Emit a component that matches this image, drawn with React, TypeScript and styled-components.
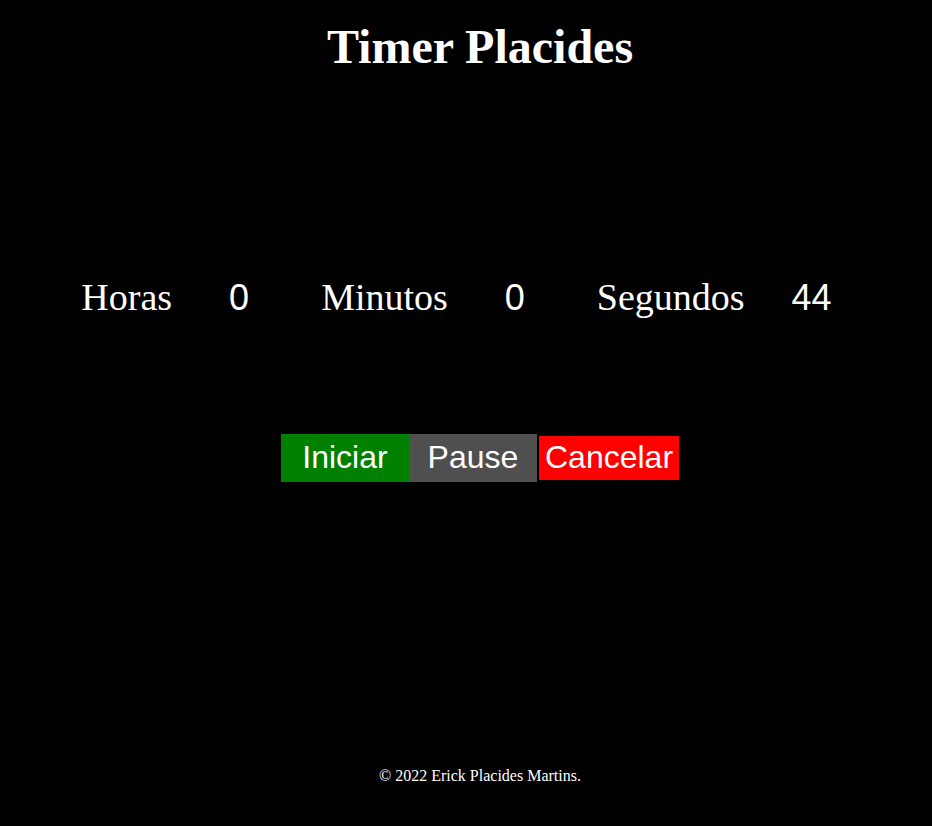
import React from "react";
import styled, { createGlobalStyle } from "styled-components";

const GlobalStyle = createGlobalStyle`
  html, body {
    margin: 0;
    padding: 0;
    background: #000000;
  }
  body {
    font-family: "Liberation Serif", "Times New Roman", serif;
    color: #ffffff;
  }
`;

const Page = styled.div`
  min-height: 826px;
  box-sizing: border-box;
  padding-left: 28px;
  display: flex;
  flex-direction: column;
  align-items: center;
`;

const Title = styled.h1`
  margin: 19px 0 0;
  font-family: "Liberation Serif", "Times New Roman", serif;
  font-weight: 700;
  font-size: 48px;
  line-height: normal;
  color: #ffffff;
`;

const TimeRow = styled.div`
  margin-top: 201px;
  display: flex;
  align-items: baseline;
  gap: 15px;
`;

const Unit = styled.div`
  display: flex;
  align-items: baseline;
`;

const Label = styled.span`
  font-family: "Liberation Serif", "Times New Roman", serif;
  font-size: 38px;
  line-height: normal;
  color: #ffffff;
`;

const Value = styled.span`
  width: 134px;
  text-align: center;
  font-family: "Liberation Sans", Arial, sans-serif;
  font-size: 36px;
  line-height: normal;
  color: #ffffff;
`;

const Controls = styled.div`
  margin-top: 115px;
  display: flex;
  align-items: center;
`;

const Button = styled.button<{ $bg: string; $w?: number; $h: number; $ml?: number }>`
  box-sizing: border-box;
  margin: 0 0 0 ${(p) => p.$ml ?? 0}px;
  border: none;
  padding: 0 6px 3px;
  width: ${(p) => (p.$w ? `${p.$w}px` : "auto")};
  height: ${(p) => p.$h}px;
  background: ${(p) => p.$bg};
  color: #ffffff;
  font-family: "Liberation Sans", Arial, sans-serif;
  font-size: 32px;
  line-height: 1;
  display: flex;
  align-items: center;
  justify-content: center;
  cursor: pointer;
`;

const Footer = styled.footer`
  margin-top: auto;
  margin-bottom: 41px;
  font-family: "Liberation Serif", "Times New Roman", serif;
  font-size: 16px;
  line-height: normal;
  color: #ffffff;
`;

const units = [
  { label: "Horas", value: 0 },
  { label: "Minutos", value: 0 },
  { label: "Segundos", value: 44 },
];

export default function App() {
  return (
    <>
      <GlobalStyle />
      <Page>
        <Title>Timer Placides</Title>
        <TimeRow>
          {units.map((u) => (
            <Unit key={u.label}>
              <Label>{u.label}</Label>
              <Value>{u.value}</Value>
            </Unit>
          ))}
        </TimeRow>
        <Controls>
          <Button $bg="#008000" $w={128} $h={48}>Iniciar</Button>
          <Button $bg="#4f4f4f" $w={128} $h={48}>Pause</Button>
          <Button $bg="#ff0000" $h={44} $ml={2}>Cancelar</Button>
        </Controls>
        <Footer>© 2022 Erick Placides Martins.</Footer>
      </Page>
    </>
  );
}
